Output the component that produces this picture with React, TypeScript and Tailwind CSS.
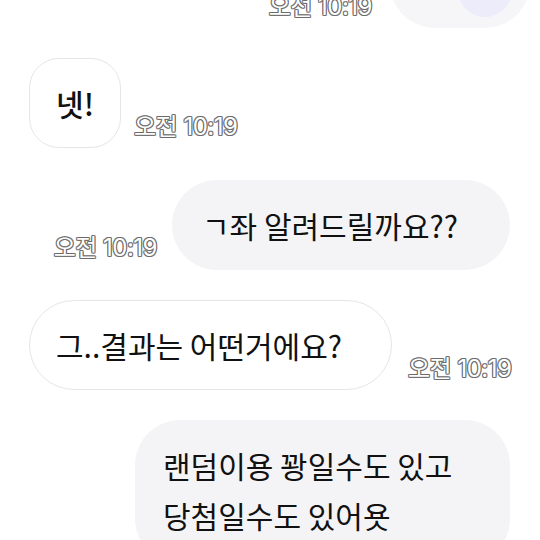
import React from 'react';

const font = "font-['Apple_SD_Gothic_Neo','Noto_Sans_CJK_KR',sans-serif]";

function Time() {
  return (
    <span
      className="font-['Inter','Noto_Sans_CJK_KR',sans-serif] text-[24px] leading-none text-white tracking-[-0.5px] [text-shadow:1px_0_#6b6b6b,-1px_0_#6b6b6b,0_1px_#6b6b6b,0_-1px_#6b6b6b,1px_1px_#8a8a8a,-1px_-1px_#8a8a8a,1px_-1px_#8a8a8a,-1px_1px_#8a8a8a]"
    >
      오전 10:19
    </span>
  );
}

export default function App() {
  return (
    <div className={`${font} w-[540px] h-[540px] overflow-hidden bg-white text-[#111] flex flex-col`}>
      {/* cut-off message at the top */}
      <div className="flex items-end justify-end gap-[18px] pr-[10px] -mt-[62px]">
        <div className="mb-[8px]">
          <Time />
        </div>
        <div className="relative w-[140px] h-[90px] rounded-[45px] bg-[#f6f6f8]">
          <div className="absolute right-[18px] bottom-[11px] w-[54px] h-[54px] rounded-full bg-[#ececfb]" />
        </div>
      </div>

      {/* incoming: 넷! */}
      <div className="flex items-end gap-[13px] pl-[29px] mt-[30px]">
        <div className="w-[92px] h-[90px] rounded-[30px] border border-[#e6e6e6] bg-white flex items-center justify-center text-[30px] font-medium">
          넷!
        </div>
        <div className="mb-[8px]">
          <Time />
        </div>
      </div>

      {/* outgoing */}
      <div className="flex items-end justify-end gap-[15px] pr-[30px] mt-[32px]">
        <div className="mb-[9px]">
          <Time />
        </div>
        <div className="w-[338px] h-[90px] rounded-[45px] bg-[#f4f4f6] flex items-center pl-[30px] text-[30px] whitespace-nowrap">
          ㄱ좌 알려드릴까요??
        </div>
      </div>

      {/* incoming */}
      <div className="flex items-end gap-[16px] pl-[29px] mt-[30px]">
        <div className="w-[363px] h-[90px] rounded-[45px] border border-[#e6e6e6] bg-white flex items-center pl-[26px] text-[30px] whitespace-nowrap">
          그..결과는 어떤거에요?
        </div>
        <div className="mb-[8px]">
          <Time />
        </div>
      </div>

      {/* outgoing, two lines */}
      <div className="flex justify-end pr-[30px] mt-[30px]">
        <div className="relative w-[375px] rounded-[45px] bg-[#f4f4f6] pt-[20px] pb-[24px] pl-[28px] text-[30px] leading-[50px]">
          <p>랜덤이용 꽝일수도 있고</p>
          <p>당첨일수도 있어욧</p>
        </div>
      </div>
      <div className="flex justify-end pr-[35px] -mt-[8px]">
        <div className="w-[40px] h-[40px] rounded-full bg-white" />
      </div>
    </div>
  );
}
